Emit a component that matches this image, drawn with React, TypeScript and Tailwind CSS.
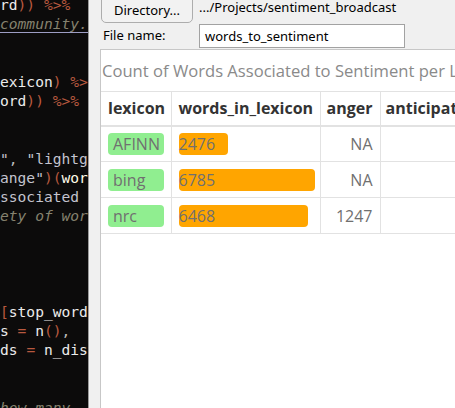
import React from 'react';

type Seg = { t: string; c?: string };

const ID = 'text-[#ececec]';
const OP = 'text-[#b8593f]';
const STR = 'text-[#c4c4cf]';
const PUN = 'text-[#bdbdbd]';
const CMT = 'text-[#86826f] italic';

const code: Seg[][] = [
  [{ t: 'rd', c: ID }, { t: '))', c: OP }, { t: ' ' }, { t: '%>%', c: OP }],
  [{ t: 'community.', c: CMT }],
  [],
  [],
  [{ t: 'exicon', c: ID }, { t: ')', c: OP }, { t: ' ' }, { t: '%>%', c: OP }],
  [{ t: 'ord', c: ID }, { t: '))', c: OP }, { t: ' ' }, { t: '%>%', c: OP }],
  [],
  [],
  [{ t: '"', c: STR }, { t: ', ', c: PUN }, { t: '"lightg', c: STR }],
  [{ t: 'ange"', c: STR }, { t: ')(', c: OP }, { t: 'wor', c: 'text-[#fffbe8]' }],
  [{ t: 'ssociated ', c: STR }],
  [{ t: 'ety of wor', c: CMT }],
  [],
  [],
  [],
  [],
  [{ t: '[', c: OP }, { t: 'stop_word', c: ID }],
  [{ t: 's', c: ID }, { t: ' ' }, { t: '=', c: OP }, { t: ' ' }, { t: 'n', c: ID }, { t: '()', c: OP }, { t: ',', c: PUN }],
  [{ t: 'ds', c: ID }, { t: ' ' }, { t: '=', c: OP }, { t: ' ' }, { t: 'n_dis', c: ID }],
  [],
  [],
  [{ t: 'how many ', c: CMT }],
];

const rows = [
  { lexicon: 'AFINN', words: 2476, anger: 'NA' },
  { lexicon: 'bing', words: 6785, anger: 'NA' },
  { lexicon: 'nrc', words: 6468, anger: '1247' },
];

const maxWords = 6785;

function Editor() {
  return (
    <div className="w-[88px] shrink-0 bg-[#0c0b0b] overflow-hidden font-['DejaVu_Sans_Mono',monospace] text-[14.6px]">
      <div className="-mt-[5px]">
        {code.map((line, i) => (
          <div key={i} className="relative h-[19.2px] leading-[19.2px] whitespace-pre">
            {line.map((s, j) => (
              <span key={j} className={s.c}>
                {s.t}
              </span>
            ))}
            {i === 1 && <div className="absolute left-0 right-0 top-[18px] h-px bg-[#9d9dc4]" />}
          </div>
        ))}
      </div>
    </div>
  );
}

export default function App() {
  return (
    <div className="flex w-[455px] h-[408px] overflow-hidden">
      <Editor />
      <div className="flex-1 flex flex-col bg-[#f0f0f0] border-l border-[#9a9a9a] font-['Noto_Sans',sans-serif] text-[13px] text-black min-w-0">
        {/* Directory row */}
        <div className="flex items-end h-[23px] pl-[12px]">
          <button className="w-[92px] h-[30px] -mt-[8px] pt-[6px] rounded-[5px] border border-[#adadad] bg-[#f2f2f2] text-[13px]">
            Directory...
          </button>
          <span className="ml-[6px] self-start mt-[-2px] whitespace-nowrap">.../Projects/sentiment_broadcast</span>
        </div>
        {/* File name row */}
        <div className="flex items-center h-[26px] pl-[14px]">
          <span className="w-[96px]">File name:</span>
          <div className="w-[206px] h-[24px] bg-white border border-[#a2a2a2] pl-[5px] leading-[22px]">
            words_to_sentiment
          </div>
        </div>
        {/* Table panel */}
        <div className="flex-1 ml-[11px] bg-white border-l border-t border-[#c7c7c7] overflow-hidden font-['Open_Sans',sans-serif] min-w-0">
          <div className="h-[41px] pl-[1px] pt-[9px] text-[16.6px] leading-[24px] text-[#8a8a8a] whitespace-nowrap">
            Count of Words Associated to Sentiment per Lexicon
          </div>
          <table className="table-fixed w-[409px] border-collapse text-[16px] whitespace-nowrap">
            <colgroup>
              <col className="w-[70px]" />
              <col className="w-[149px]" />
              <col className="w-[60px]" />
              <col className="w-[130px]" />
            </colgroup>
            <thead>
              <tr className="border-t border-b-2 border-[#e2e2e2] text-[#333] font-bold">
                <th className="h-[34px] px-[7px] text-left border-r border-[#e2e2e2]">lexicon</th>
                <th className="px-[7px] text-left border-r border-[#e2e2e2]">words_in_lexicon</th>
                <th className="px-[6px] text-left border-r border-[#e2e2e2]">anger</th>
                <th className="px-[5px] text-left overflow-hidden">anticipation</th>
              </tr>
            </thead>
            <tbody className="text-[#707070]">
              {rows.map((r) => (
                <tr key={r.lexicon} className="border-b border-[#e2e2e2]">
                  <td className="h-[36px] px-[7px] border-r border-[#e2e2e2]">
                    <div className="h-[22px] leading-[22px] rounded-[4px] bg-[#90ee90] pl-[5px]">{r.lexicon}</div>
                  </td>
                  <td className="px-[7px] border-r border-[#e2e2e2]">
                    <div
                      className="h-[22px] leading-[22px] rounded-[4px] bg-[#ffa500]"
                      style={{ width: `${(r.words / maxWords) * 136}px` }}
                    >
                      {r.words}
                    </div>
                  </td>
                  <td className="px-[7px] text-right border-r border-[#e2e2e2]">{r.anger}</td>
                  <td className="px-[7px]"></td>
                </tr>
              ))}
            </tbody>
          </table>
        </div>
      </div>
    </div>
  );
}
